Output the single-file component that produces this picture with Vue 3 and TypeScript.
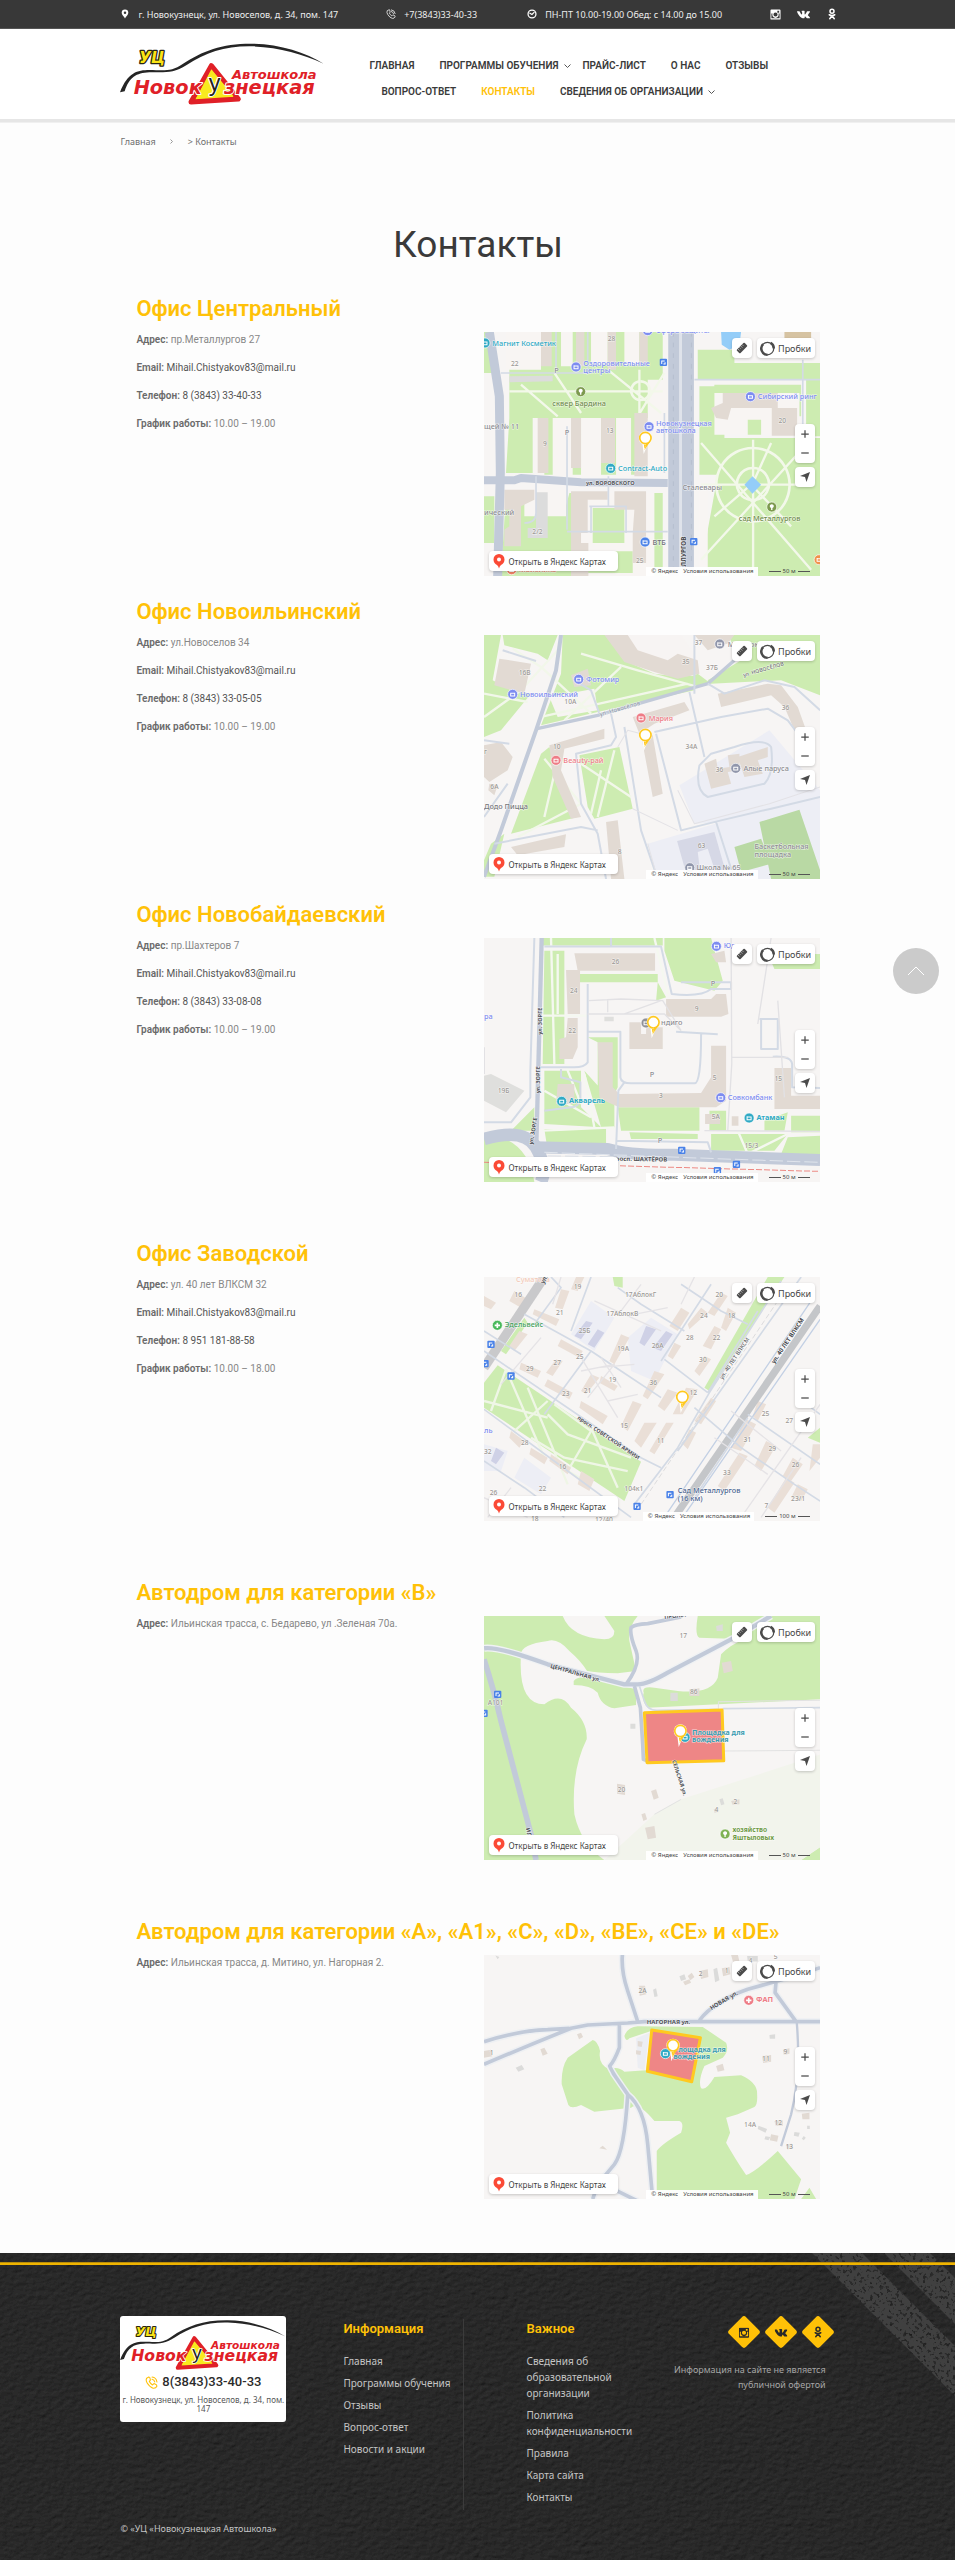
<script setup lang="ts">
import { h } from 'vue'

interface Shape { d: string; f?: string; s?: string; w?: number; dash?: string }
interface Label { x: number; y: number; t: string; c?: string; s?: number; r?: number; b?: boolean }
interface Poi { x: number; y: number; c: string; k: 'dot' | 'stop' | 'tree' | 'plus' }
interface CityMap { box: string; scale: string; shapes: Shape[]; pois: Poi[]; labels: Label[]; pin: [number, number] }
interface Place { title: string; rows: [string, string, boolean][]; map: CityMap; spaced: boolean }

const word = (x: number, y: number, size: number, text: string, attrs: Record<string, string | number> = {}) =>
  h('text', {
    x, y, 'font-size': size, 'font-family': 'DejaVu Sans, sans-serif', 'font-weight': 700, 'font-style': 'italic',
    fill: '#e02027', 'paint-order': 'stroke', 'stroke-linejoin': 'round', ...attrs
  }, text)

const SchoolLogo = () => h('svg', { viewBox: '62 124 612 192' }, [
  h('path', { fill: '#252525', d: 'M62 275C85 215 115 208 150 208C190 208 215 215 250 190C310 150 370 128 460 129C540 130 620 155 673 189C610 160 540 140 460 137C380 135 320 155 262 193C220 220 195 214 150 215C110 217 90 230 76 272Z' }),
  h('path', { fill: '#f8ea1e', stroke: '#e02027', 'stroke-width': 15, 'stroke-linejoin': 'round', d: 'M336 195L417 295L275 304Z' }),
  h('path', { fill: '#f8ea1e', d: 'M336 206L402 285L290 294Z' }),
  word(398, 236, 39, 'Автошкола'),
  word(103, 279, 58, 'Новок', { stroke: '#ffffff', 'stroke-width': 6 }),
  word(374, 279, 58, 'знецкая', { stroke: '#ffffff', 'stroke-width': 6 }),
  word(328, 271, 70, 'у', { fill: '#222222', stroke: '#ffffff', 'stroke-width': 6, 'font-family': 'Liberation Sans, sans-serif', 'font-weight': 400, 'font-style': 'normal' }),
  word(120, 188, 45, 'УЦ', { fill: '#fbe416', stroke: '#2a2611', 'stroke-width': 8 })
])

const G = '#cdecb1'
const B = '#e2dad3'
const R = '#c2cad9'
const P = '#d3dae5'
const Z = '#edeef5'
const VIO = '#7d8cf0'
const TEAL = '#2fa9c4'
const GRN = '#7c9a4e'
const PINK = '#ee7c86'
const BLUE = '#4a82e8'
const GREY = '#8d8d92'
const num = (x: number, y: number, t: string): Label => ({ x, y, t, c: '#9b9894', s: 20 })

const central: CityMap = {
  box: '9 7 1008 732', scale: '50 м', pin: [493, 325],
  shapes: [
    { d: 'M85 7H545V265H85ZM85 265H155V430H75ZM190 265H470V435H190ZM75 490H250V739H60ZM265 490H545V739H200ZM9 7H35V130H9ZM650 60H760V150H650ZM760 100H1017V150H760ZM655 170H730V435H655ZM730 325H1017V739H655ZM975 150H1017V320H975ZM700 165H960V260H690ZM9 500H40V640H9Z', f: G },
    { d: 'M75 7H180V120H75ZM240 7H275V110H240ZM330 7H380V105H330ZM430 7H475V105H430ZM160 265H175V430H160ZM215 265H275V440H215ZM300 265H360V440H300ZM405 265H450V440H405ZM500 150H560V430H500ZM700 190H955V315H700ZM290 490H520V739H290ZM655 480H680V739H655ZM130 480H255V560H130Z', f: '#f8f5f3' },
    { d: 'M335 535H430V640H335ZM310 665H455V730H310ZM280 120H370L340 260H290ZM800 270H840V315H800Z', f: G },
    { d: 'M85 185H545M120 165L230 260M220 130L300 250M380 120L540 250M475 120V260M550 130L470 260M660 340L990 720M980 340L660 690M816 330V739M660 465H1000M700 560L810 465L930 590M870 340L820 450', s: '#f3f8ea', w: 7 },
    { d: 'M815 355a110 110 0 1 0 1 0M815 415a48 48 0 1 0 1 0M478 155a28 28 0 1 0 1 0', s: '#f3f8ea', w: 8 },
    { d: 'M180 7H212V110H180ZM285 7H310V110H285ZM380 7H405V120H380ZM475 7H500V105H475ZM170 265H202V430H170ZM270 265H300V415H270ZM360 265H402V400H360ZM460 250H500V440H460ZM70 480H160V510L120 530V650H70V600L85 590V540H70ZM270 485H380V510H320V610H300V640H322V739H270ZM400 485H495V700H455V610L460 540H400ZM725 190H890V235H750L740 270L705 265L690 235L725 220ZM872 235H948V318H872Z', f: B },
    { d: 'M85 140L215 138V155L85 158ZM165 488H200V625H140V595H165Z', f: '#dcdcdc' },
    { d: 'M910 7H990V60L910 45Z', f: '#d6c3a2' },
    { d: 'M25 7L55 200L58 430L50 739', s: R, w: 27 },
    { d: 'M9 452H100L120 445L300 458L560 460', s: R, w: 24 },
    { d: 'M580 7V739M620 7V739', s: R, w: 37 },
    { d: 'M598 7V739', s: '#dfe3eb', w: 8 },
    { d: 'M577 7V739M631 7V739', s: '#b0b9ca', w: 2, dash: '14 18' },
    { d: 'M640 150H1017M60 130H330M258 290V600M382 440V530M325 530H435V610M330 610V530M258 606H560M470 606H520M550 250V430M130 580Q165 580 165 550V440M965 90V330M225 7V120M320 7V120', s: P, w: 5 },
    { d: 'M720 7L780 7L775 45L745 60L722 45Z', f: '#94cdf8' },
    { d: 'M814 440L840 465L814 492L790 465Z', f: '#94cdf8' }
  ],
  pois: [
    { x: 12, y: 40, c: TEAL, k: 'dot' }, { x: 285, y: 112, c: VIO, k: 'dot' }, { x: 299, y: 186, c: GRN, k: 'tree' },
    { x: 504, y: 291, c: VIO, k: 'dot' }, { x: 389, y: 416, c: TEAL, k: 'dot' }, { x: 808, y: 201, c: VIO, k: 'dot' },
    { x: 872, y: 532, c: GRN, k: 'tree' }, { x: 492, y: 637, c: BLUE, k: 'dot' }, { x: 547, y: 98, c: BLUE, k: 'stop' },
    { x: 638, y: 636, c: BLUE, k: 'stop' }, { x: 92, y: 720, c: '#ee8066', k: 'dot' }, { x: 1014, y: 690, c: '#f0924c', k: 'dot' }, { x: 500, y: 3, c: VIO, k: 'dot' }
  ],
  labels: [
    { x: 34, y: 48, t: 'Магнит Косметик', c: TEAL }, { x: 307, y: 109, t: 'Оздоровительные', c: VIO }, { x: 307, y: 131, t: 'центры', c: VIO },
    { x: 214, y: 229, t: 'сквер Бардина', c: '#6f8b4c' }, { x: 525, y: 288, t: 'Новокузнецкая', c: VIO }, { x: 525, y: 310, t: 'автошкола', c: VIO },
    { x: 411, y: 424, t: 'Contract-Auto', c: TEAL }, { x: 830, y: 208, t: 'Сибирский ринг', c: VIO }, { x: 773, y: 575, t: 'сад Металлургов', c: '#6f8b4c' },
    { x: 604, y: 482, t: 'Сталевары', c: GREY }, { x: 514, y: 645, t: 'ВТБ', c: '#6f7078' }, { x: 9, y: 297, t: 'щей № 11', c: GREY },
    { x: 9, y: 556, t: 'ический', c: GREY }, { x: 315, y: 465, t: 'ул. ВОРОВСКОГО', c: '#55575c', s: 17, b: true },
    { x: 614, y: 710, t: 'ЛЛУРГОВ', c: '#44464b', s: 19, r: -90, b: true }, { x: 114, y: 726, t: 'Майолика', c: '#ee8066' },
    { x: 525, y: 9, t: 'Сфера защиты', c: VIO }, { x: 220, y: 131, t: 'P', c: GREY }, { x: 251, y: 317, t: 'P', c: GREY },
    num(380, 34, '28'), num(90, 109, '22'), num(186, 348, '9'), num(375, 309, '13'), num(892, 279, '20'), num(154, 614, '2/2'), num(465, 699, '25')
  ]
}

const ilyinsky: CityMap = {
  box: '9 14 1008 732', scale: '50 м', pin: [493, 314],
  shapes: [
    { d: 'M9 14H60L35 150L90 180L150 190L60 300L9 320ZM65 14H230L200 90L170 70L70 45ZM245 14H390L520 120L650 140L640 180L350 245L180 285L240 130ZM740 14H1017V195L900 150L690 160L680 150L780 90ZM280 40L400 110L580 160L650 130L690 160L450 215L350 240L340 180ZM180 370L205 350L260 500L290 560L90 610ZM295 375L415 350L455 535L340 565L320 530ZM30 640L70 610L40 739H9L9 690Z', f: G },
    { d: 'M380 14H600L650 90L600 140L520 130L440 95ZM205 200L340 175L350 240L230 260Z', f: '#f7f4f3' },
    { d: 'M595 465L865 300L1017 480V560L640 580ZM500 640L720 575L840 535L1017 500V746H530Z', f: Z },
    { d: 'M835 575L955 538L1017 720V746H870ZM760 650L840 625L870 700L780 725Z', f: '#b9d9a4' },
    { d: 'M588 632L700 605L740 746H710L680 655L650 665L660 746H620Z', f: '#d6d8e6' },
    { d: 'M9 190L140 215M95 55L180 110L330 250M300 70L470 120L650 170M180 260L620 160M420 110L250 270M110 620L300 520L190 385M190 560L220 430M300 400L450 500M360 420L330 550M400 360L350 560M9 260L120 180L230 60', s: '#f2f7ea', w: 7 },
    { d: 'M55 85L150 100L130 190L40 165ZM9 345L60 335L95 380L80 420L25 455L9 440ZM25 460L50 465L40 495L22 480ZM270 135L320 115L330 165L280 170ZM370 14H440L470 60L560 90L590 70L650 90L655 130L590 145L520 125L430 95ZM640 14H760L740 40L680 60ZM455 260L610 215L625 240L520 280L475 310ZM480 315H515L545 490L515 500ZM205 345L370 295V325L250 355L240 420L300 560L270 565L215 440ZM710 190L860 160L900 165L950 230L975 300L940 300L910 230L870 195L720 230ZM670 400L705 385L710 415L745 410L740 375L775 370V420L740 425L750 460L690 475ZM770 380L860 350V380L830 390L845 430L790 440ZM375 575L410 570L430 746H390ZM90 650L255 612L250 650L110 675Z', f: B },
    { d: 'M9 739L60 600L165 300L225 120L240 14', s: R, w: 12 },
    { d: 'M165 296L350 255L680 160L760 90', s: R, w: 10 },
    { d: 'M390 250L405 320L390 345L285 370L300 520L350 610L375 746M625 185L670 380M520 305L720 260L860 235L920 270L950 310M525 310L600 600L720 570L870 535L1017 500M680 160L730 190L850 150L940 170L1017 240M655 405Q640 480 680 500L850 460Q880 430 870 350Q850 320 760 350L690 370ZM65 60L165 92M280 150L330 180L355 250M9 330L85 340M40 640L300 590L350 600M9 560L80 460M705 575L760 746M430 290L480 600L530 746M640 14L640 190', s: P, w: 6 },
    { d: 'M410 350L440 300L480 310M455 535L590 600M590 480L640 580L865 520L1017 470M500 640L530 746', s: '#e3e2e6', w: 3 }
  ],
  pois: [
    { x: 293, y: 147, c: VIO, k: 'dot' }, { x: 95, y: 192, c: VIO, k: 'dot' }, { x: 480, y: 263, c: PINK, k: 'dot' },
    { x: 225, y: 390, c: PINK, k: 'dot' }, { x: 764, y: 414, c: '#9096ab', k: 'dot' }, { x: 716, y: 41, c: '#9096ab', k: 'dot' }, { x: 626, y: 712, c: '#9096ab', k: 'dot' }
  ],
  labels: [
    { x: 315, y: 154, t: 'Фотомир', c: VIO }, { x: 117, y: 200, t: 'Новоильинский', c: VIO }, { x: 503, y: 271, t: 'Мария', c: PINK },
    { x: 247, y: 397, t: 'Beauty-рай', c: PINK }, { x: 787, y: 421, t: 'Алые паруса', c: GREY }, { x: 740, y: 49, t: 'Мои док', c: GREY },
    { x: 9, y: 535, t: 'Додо Пицца', c: '#77777c' }, { x: 820, y: 656, t: 'Баскетбольная', c: GREY }, { x: 820, y: 679, t: 'площадка', c: GREY },
    { x: 646, y: 720, t: 'Школа № 65', c: GREY }, { x: 788, y: 140, t: 'ул. НОВОСЁЛОВ', c: '#6a6c70', s: 16, r: -16 },
    { x: 358, y: 258, t: 'ул. Новосёлов', c: '#8d97a8', s: 18, r: -16 },
    num(113, 134, '16В'), num(641, 44, '37'), num(603, 102, '35'), num(675, 118, '37Б'), num(902, 240, '36'), num(216, 357, '10'),
    num(613, 357, '34А'), num(704, 426, '36'), num(650, 652, '63'), num(28, 477, '6А'), num(410, 672, '8'), num(250, 222, '10А'), num(9, 372, 'г')
  ]
}

const baydaevsky: CityMap = {
  box: '9 22 1008 732', scale: '50 м', pin: [517, 275],
  shapes: [
    { d: 'M185 22H545V45H185ZM190 60H250V400H185ZM270 130H530V155H270ZM550 22H690L725 150L700 180L580 150L550 60ZM530 155L555 200L525 210ZM860 70H1017V115H880ZM320 320H410V470L400 490H350V335ZM190 420H300V530L360 590L190 580ZM410 530H655V600H420ZM310 420L400 520L400 590H360ZM685 540H735V600H685ZM850 570L920 545L910 600H850ZM930 555H1017V605H930ZM190 595H375V660H200ZM445 605L650 610V625H450ZM690 610H920L880 660H690ZM920 620L1017 615V670H900ZM9 610Q140 620 160 754H9ZM160 530V600L90 600Z', f: G },
    { d: 'M210 22L220 400M185 255H320M230 70V250M260 400V420L300 520M190 480L330 560M185 600L400 590M520 22L560 190M310 430L340 590M770 600L800 670L920 610', s: '#f5f8f0', w: 7 },
    { d: 'M280 68H522V120H290ZM255 118H297V250H260ZM260 262H290V350L275 385H235V325L255 320ZM350 335H395V470L415 490L660 487L690 440V345H735V510L705 530H415L380 515L355 500ZM555 205H690L705 190H735L742 250L720 258H555ZM445 275L480 275V310H495V290H545V355H445ZM230 460H280V520H225ZM672 550H717V580H672ZM752 557H772V585H752ZM880 412H930V495H1017V535H880ZM690 70L730 60L735 95H705Z', f: B },
    { d: 'M9 435L30 430L130 480L75 545L9 510ZM370 258H398V272H370Z', f: '#dfdfdd' },
    { d: 'M160 22L148 420V500L90 575H9', s: P, w: 6 },
    { d: 'M182 22L166 640', s: R, w: 13 },
    { d: 'M9 625Q130 590 165 650T180 754', s: R, w: 38 },
    { d: 'M160 650L380 655Q450 675 580 672L1017 688', s: R, w: 36 },
    { d: 'M190 665L1017 695M200 675L500 680', s: '#dfe4ec', w: 3, dash: '40 12' },
    { d: 'M9 695L400 705L1017 722', s: '#ed8a84', w: 3, dash: '18 6' },
    { d: 'M190 48H540L572 190Q660 200 690 175H750V155H600M320 160V395Q310 410 280 410H180M320 303H418V440Q420 458 450 458H640Q660 460 660 310M585 303L710 311M430 455L412 480L405 655M240 415V440L298 455V510Q290 530 270 530L190 540M408 630L680 635L690 665M875 378Q930 375 933 400V470L1017 472M390 22V48M835 265H890V355H840V265', s: P, w: 6 },
    { d: 'M750 22L752 400L740 600M870 22L830 280M890 210L910 500M323 210L420 205L545 210L600 300M430 250L540 210M752 380H920M10 350L10 430M380 205V245M320 250H550L600 300M670 600L1017 602', s: '#e2e1e4', w: 4 }
  ],
  pois: [
    { x: 706, y: 47, c: VIO, k: 'dot' }, { x: 495, y: 277, c: '#8f9097', k: 'dot' }, { x: 242, y: 512, c: TEAL, k: 'dot' },
    { x: 719, y: 501, c: VIO, k: 'dot' }, { x: 804, y: 562, c: TEAL, k: 'dot' }, { x: 602, y: 659, c: BLUE, k: 'stop' }, { x: 766, y: 701, c: BLUE, k: 'stop' }, { x: 709, y: 720, c: BLUE, k: 'stop' }
  ],
  labels: [
    { x: 728, y: 52, t: 'Юдин', c: VIO }, { x: 540, y: 284, t: 'ндиго', c: GREY }, { x: 264, y: 518, t: 'Акварель', c: TEAL, b: true },
    { x: 740, y: 507, t: 'Совкомбанк', c: VIO }, { x: 826, y: 568, t: 'Атаман', c: TEAL, b: true },
    { x: 182, y: 312, t: 'ул. ЗОРГЕ', c: '#4f5156', s: 17, r: -90, b: true }, { x: 177, y: 488, t: 'ул. ЗОРГЕ', c: '#4f5156', s: 17, r: -90, b: true },
    { x: 155, y: 642, t: 'ул. ЗОРГЕ', c: '#4f5156', s: 17, r: -80, b: true }, { x: 392, y: 690, t: 'просп. ШАХТЁРОВ', c: '#4f5156', s: 18, r: 1, b: true },
    { x: 9, y: 266, t: 'ра', c: VIO }, { x: 689, y: 167, t: 'P', c: GREY }, { x: 506, y: 439, t: 'P', c: GREY }, { x: 530, y: 638, t: 'P', c: GREY },
    num(392, 100, '26'), num(267, 186, '24'), num(262, 307, '22'), num(641, 240, '9'), num(534, 501, '3'), num(695, 447, '5'), num(692, 566, '5А'),
    num(880, 450, '15'), num(50, 487, '19Б'), num(790, 651, '15/3')
  ]
}

const zavodskoy: CityMap = {
  box: '9 18 1008 732', scale: '100 м', pin: [604, 378],
  shapes: [
    { d: 'M50 283L480 572L430 690L9 410V335Z', f: G },
    { d: 'M670 350L860 18H910L685 360ZM395 18H425V50L400 45ZM60 240L130 140L140 155L75 250ZM980 500L1017 470V515Z', f: G },
    { d: 'M270 190L330 90L400 140L340 240ZM440 200L510 140L590 190L520 330L450 300ZM9 520L80 540L60 600L9 600ZM130 560L210 620L180 670L100 620Z', f: Z },
    { d: 'M30 420L75 295M75 295L190 560M9 390L200 440M140 350L260 640M220 400L330 480L260 600L330 640M330 470L410 650M200 430L260 490L450 560M150 500L250 560L440 600M100 480L200 390', s: '#eff6e6', w: 7 },
    { d: 'M240 55L265 60L245 115L222 110ZM285 18H310L290 60L270 55ZM160 115L235 145L225 165L155 130ZM115 180L140 190L100 240L85 225ZM240 205L305 240L295 260L230 225ZM225 265L245 270L215 315L195 305ZM120 275L180 300L170 320L115 295ZM200 325L275 365L265 385L190 345ZM330 310L355 320L315 370L300 360ZM360 315L410 345L400 360L355 335ZM300 390L380 435L365 460L295 410ZM455 390L482 400L440 480L420 465ZM490 455L527 455L480 530L460 510ZM555 455H578L520 550L505 540ZM520 300L550 310L500 385L485 375ZM560 355L590 365L550 420L530 405ZM615 350L650 355L605 430L575 430ZM420 190L445 200L400 280L385 270ZM600 110L625 125L590 180L565 165ZM660 110L680 125L625 175L620 160ZM720 65L740 75L700 135L680 125ZM740 110L765 125L735 180L720 170ZM700 165L720 175L690 235L665 225ZM580 215L600 225L575 265L560 255ZM670 255L690 265L655 315L640 300ZM690 380L705 390L660 460L640 450ZM625 475L645 485L620 535L605 520ZM795 445L825 460L780 540L750 530ZM775 545L800 555L730 660L710 645ZM855 510L885 525L840 600L820 585ZM935 560L965 580L930 630L905 615ZM915 620L940 635L880 725L860 710ZM995 520H1017V560L985 600ZM830 390L855 400L830 450L815 435ZM950 640L980 655L960 690L930 680ZM90 480L130 510L115 530L85 500ZM150 530L200 560L190 580L145 550ZM210 550L270 590L260 610L205 570ZM300 600L340 625L325 660L290 640ZM9 75L45 95L30 115L9 105ZM100 60L140 85L120 110L85 90Z', f: '#eadfd7' },
    { d: 'M315 150L335 155L300 205L280 195ZM350 175L370 185L340 230L320 220ZM495 165L525 175L490 225L475 215ZM555 180L575 190L540 240L515 230ZM45 530L70 545L45 580L30 570Z', f: '#cfd1e6' },
    { d: 'M9 290L190 18', s: '#c9c9cb', w: 28 },
    { d: 'M575 746L1017 105', s: '#c4c6c9', w: 22 },
    { d: 'M600 746L1017 145M545 746L990 90', s: '#c3d0e4', w: 4 },
    { d: 'M480 700L910 60', s: '#cfcfd1', w: 2, dash: '16 8' },
    { d: 'M9 240L480 560L540 590M550 265L680 365M460 700L590 530L685 365L900 30M130 130L330 240L420 300L540 380M540 270L690 40M210 18L240 50L160 160M330 18L270 180M410 50L480 100L610 180M800 430L1017 580M960 18L590 540M9 415L260 600L450 739M640 410L780 530L940 640L1017 690M9 570L130 650L250 739M800 440L640 680M9 180L120 250M330 240L190 430M600 40L720 120L800 160M950 380L1017 430M680 365L830 120', s: P, w: 5 },
    { d: 'M9 680L140 739M20 739L90 650M360 260L420 350M350 290L460 280M300 300L400 280L320 380M380 390L470 370M240 18L215 100M340 90L540 180M480 40L420 120M700 500L860 610M750 420L900 540M640 18L600 100M460 130L560 110M410 440L300 260M840 739L960 560M780 739L1017 400M180 200L60 340', s: '#e5e3e6', w: 4 }
  ],
  pois: [
    { x: 49, y: 163, c: '#48b85a', k: 'plus' }, { x: 30, y: 220, c: BLUE, k: 'stop' }, { x: 90, y: 315, c: BLUE, k: 'stop' }, { x: 12, y: 278, c: BLUE, k: 'stop' },
    { x: 567, y: 671, c: BLUE, k: 'stop' }, { x: 468, y: 706, c: BLUE, k: 'stop' }
  ],
  labels: [
    { x: 71, y: 169, t: 'Эдельвейс', c: '#3f9f5a' }, { x: 590, y: 667, t: 'Сад Металлургов', c: '#4b6590' }, { x: 590, y: 689, t: '(16 км)', c: '#4b6590' },
    { x: 288, y: 443, t: 'просп. СОВЕТСКОЙ АРМИИ', c: '#4f5156', s: 16, r: 34, b: true },
    { x: 724, y: 326, t: 'ул. 40 ЛЕТ ВЛКСМ', c: '#5b5d62', s: 17, r: -56 }, { x: 880, y: 279, t: 'ул. 40 ЛЕТ ВЛКСМ', c: '#44464b', s: 18, r: -56, b: true },
    { x: 105, y: 34, t: 'Суматоха', c: '#f3cbb9' }, { x: 188, y: 40, t: 'ул.', c: '#55575c', s: 19, r: -60, b: true },
    { x: 9, y: 487, t: 'ль', c: VIO },
    num(100, 78, '16'), num(278, 54, '19'), num(225, 131, '21'), num(432, 78, '17АблокГ'), num(376, 134, '17АблокВ'), num(293, 187, '25Б'), num(512, 232, '26А'),
    num(408, 241, '19А'), num(285, 265, '25'), num(217, 283, '27'), num(135, 301, '29'), num(383, 333, '19'), num(308, 367, '21'), num(243, 375, '23'),
    num(505, 341, '36'), num(625, 372, '12'), num(654, 272, '30'), num(615, 206, '28'), num(695, 207, '22'), num(657, 140, '24'), num(740, 141, '18'), num(703, 77, '20'),
    num(418, 472, '15'), num(527, 516, '11'), num(787, 512, '31'), num(862, 539, '29'), num(726, 611, '33'), num(842, 434, '25'), num(913, 457, '27'), num(932, 589, '26'),
    num(850, 711, '7'), num(930, 691, '23/1'), num(120, 523, '28'), num(233, 594, '16'), num(173, 659, '22'), num(26, 672, '26'), num(9, 548, '32'), num(430, 660, '104к1'), num(342, 754, '12/40'), num(150, 751, '18')
  ]
}

const trackB: CityMap = {
  box: '9 15 1008 732', scale: '50 м', pin: [598, 360],
  shapes: [
    { d: 'M9 15H245Q270 80 370 85Q400 85 400 60L370 15H470Q440 50 445 90L465 180L410 187Q345 185 318 180Q300 150 265 120Q230 80 200 90Q120 100 120 130Q110 280 190 280Q240 240 270 290Q320 330 317 385Q270 480 280 610Q300 700 370 747H9Z', f: G },
    { d: 'M278 210Q290 195 320 200L465 235V282L400 292Q360 285 350 245Q330 222 278 222ZM650 15H1017V265L500 290Q480 270 488 245Q480 225 520 230L590 240Q690 250 710 200L720 130Q750 100 790 85L655 80Q640 75 650 15ZM960 747L1017 708V747Z', f: G },
    { d: 'M370 747L520 610Q560 585 600 565L880 475L1017 430V708L960 747Z', f: '#f2f4ec' },
    { d: 'M9 112Q50 105 200 160L430 220H470Q500 220 560 185L760 80L870 15', s: '#f0f2f4', w: 21 },
    { d: 'M9 112Q50 105 200 160L430 220H470Q500 220 560 185L760 80L870 15', s: R, w: 13 },
    { d: 'M435 220Q480 160 465 120Q445 70 450 50Q460 40 500 38L600 18M460 225L478 290L485 400L487 445L500 450', s: R, w: 11 },
    { d: 'M9 145Q40 240 60 330L150 670L165 747', s: R, w: 17 },
    { d: 'M475 225L490 270Q500 300 530 298L710 295M725 293L1017 290', s: P, w: 5 },
    { d: 'M712 295V272L1017 268M725 420L1017 418M520 610L600 565', s: '#e2e2e2', w: 3 },
    { d: 'M722 155L750 150L755 180L728 187ZM625 235L655 232V255H625ZM408 518L432 522V552L408 548ZM510 540L525 535L533 560L518 566ZM492 650L520 645L525 680L500 685ZM481 610L492 606L498 625L487 630ZM698 595L712 590V604L700 605ZM750 570L775 565V580L755 582Z', f: B },
    { d: 'M705 45L725 40V60H707ZM568 245L590 245V270H568ZM448 338H463V353H448ZM715 565L725 562L730 580L720 583Z', f: '#dcdcda' },
    { d: 'M490 305L723 297L728 449L498 455Z', f: '#ee8686', s: '#ffc91f', w: 9 }
  ],
  pois: [{ x: 612, y: 379, c: '#2fa9c4', k: 'dot' }, { x: 732, y: 669, c: '#7fb253', k: 'tree' }, { x: 50, y: 250, c: BLUE, k: 'stop' }, { x: 9, y: 307, c: BLUE, k: 'stop' }],
  labels: [
    { x: 633, y: 371, t: 'Площадка для', c: '#3a9cb0', b: true, s: 21 }, { x: 633, y: 393, t: 'вождения', c: '#3a9cb0', b: true, s: 21 },
    { x: 207, y: 170, t: 'ЦЕНТРАЛЬНАЯ ул.', c: '#4f5156', s: 17, r: 16, b: true }, { x: 573, y: 449, t: 'СЕЛЬСКАЯ ул.', c: '#4f5156', s: 16, r: 72, b: true },
    { x: 754, y: 663, t: 'хозяйство', c: '#6f9a45', b: true, s: 20 }, { x: 754, y: 686, t: 'Яштыловых', c: '#6f9a45', b: true, s: 20 },
    { x: 550, y: 24, t: 'ПРОЛЕТ', c: '#55575c', s: 17, r: -6, b: true }, { x: 134, y: 652, t: 'ИЛЬИНС', c: '#55575c', s: 18, r: 76, b: true },
    num(595, 82, '17'), num(627, 250, '86'), num(410, 542, '20'), num(757, 579, '2'), num(700, 604, '4'), num(20, 282, 'А101')
  ]
}

const trackA: CityMap = {
  box: '9 12 1008 732', scale: '50 м', pin: [576, 283],
  shapes: [
    { d: 'M430 255Q440 228 470 226L665 228L735 275Q745 300 725 320L670 345Q650 390 660 412Q675 420 700 378L780 373Q830 395 828 430Q830 460 820 468L770 490L735 500L747 545L735 575Q760 620 795 672Q820 665 890 600L960 685L940 744H527V600Q540 580 600 545Q610 515 595 510H520Q470 450 450 470L340 482L300 462Q270 475 262 462L242 400Q240 350 260 320L335 267Q350 270 357 300Q350 340 385 355Q410 345 430 362L495 358L510 240L445 262Q435 275 430 255ZM960 744L985 710L1005 744Z', f: G },
    { d: 'M465 262L505 245L490 358L470 350Z', f: '#eceef3' },
    { d: 'M9 272Q120 238 200 236L265 232M9 340Q150 280 270 232L320 222L440 216L490 212H1017M424 12Q420 60 440 120L470 212M415 222V290Q400 330 386 345Q390 360 440 430Q430 600 400 640L350 700L335 744M395 365L440 430Q490 470 500 580L515 744M655 208Q700 150 800 115L960 70L1017 50M885 90L882 125L945 212M405 718L470 750', s: '#eef0f3', w: 20 },
    { d: 'M9 272Q120 238 200 236L265 232M9 340Q150 280 270 232L320 222L440 216L490 212H1017M424 12Q420 60 440 120L470 212M415 222V290Q400 330 386 345Q390 360 440 430Q430 600 400 640L350 700L335 744M395 365L440 430Q490 470 500 580L515 744M655 208Q700 150 800 115L960 70L1017 50M885 90L882 125L945 212M405 718L470 750', s: R, w: 11 },
    { d: 'M947 215Q960 370 930 490L900 585', s: R, w: 7 },
    { d: 'M474 104L492 104L496 130L476 134ZM620 75L632 65L640 78L628 88ZM606 92L625 85L630 95L612 103ZM655 60L680 55L682 78L660 84ZM722 52L745 48L748 70L726 76ZM178 295L190 290L200 308L185 314ZM9 300L30 296L34 316L9 320ZM288 250L300 245L306 258L294 265ZM843 315L870 312V332L846 336ZM905 296L925 292V308L908 312ZM705 345L725 338L730 358L710 362ZM962 488L985 485V505H964ZM880 510L905 508V525H884ZM870 550L892 554L888 572L866 568ZM355 592L365 584L378 596ZM750 12L770 10L775 32L757 38ZM470 270L485 272L482 288L470 286ZM465 298L480 300L478 312L465 310ZM915 580L932 578V592L918 596Z', f: B },
    { d: 'M595 76L610 70L615 85L600 90ZM697 55L708 50L715 88L702 94ZM516 116L525 112L530 136L520 138ZM104 350L122 342L130 355L112 362ZM865 252L882 250V263H866ZM832 524L858 534L853 545L830 534ZM940 543L956 545L952 557L938 554ZM968 555L974 560L968 568L962 563ZM853 556L868 558L862 568L850 565ZM798 15H830V32H800ZM978 524H986V534H978ZM43 14L55 18L50 25Z', f: '#dbdbda' },
    { d: 'M512 237L658 260L632 392L499 361Z', f: '#ee8686', s: '#ffc91f', w: 9 }
  ],
  pois: [{ x: 553, y: 308, c: '#2fa9c4', k: 'dot' }, { x: 803, y: 148, c: PINK, k: 'plus' }],
  labels: [
    { x: 592, y: 303, t: 'лощадка для', c: '#3a9cb0', b: true, s: 21 }, { x: 577, y: 325, t: 'вождения', c: '#3a9cb0', b: true, s: 21 },
    { x: 825, y: 154, t: 'ФАП', c: PINK, b: true }, { x: 497, y: 220, t: 'НАГОРНАЯ ул.', c: '#4f5156', s: 18, b: true },
    { x: 691, y: 178, t: 'НОВАЯ ул.', c: '#4f5156', s: 18, r: -31, b: true },
    num(472, 127, '2А'), num(653, 75, '2'), num(731, 66, '1'), num(802, 37, '4'), num(878, 24, '5'), num(843, 330, '11'), num(907, 309, '9'),
    num(880, 523, '12'), num(789, 527, '14А'), num(913, 594, '13'), num(26, 312, '1')
  ]
}

const office = (title: string, address: string, phone: string, hours: string, map: CityMap, spaced = false): Place => ({
  title, map, spaced,
  rows: [['Адрес:', address, false], ['Email:', 'Mihail.Chistyakov83@mail.ru', true], ['Телефон:', phone, true], ['График работы:', hours, false]]
})

const places: Place[] = [
  office('Офис Центральный', 'пр.Металлургов 27', '8 (3843) 33-40-33', '10.00 – 19.00', central),
  office('Офис Новоильинский', 'ул.Новоселов 34', '8 (3843) 33-05-05', '10.00 – 19.00', ilyinsky),
  office('Офис Новобайдаевский', 'пр.Шахтеров 7', '8 (3843) 33-08-08', '10.00 – 19.00', baydaevsky, true),
  office('Офис Заводской', 'ул. 40 лет ВЛКСМ 32', '8 951 181-88-58', '10.00 – 18.00', zavodskoy, true),
  { title: 'Автодром для категории «В»', rows: [['Адрес:', 'Ильинская трасса, с. Бедарево, ул .Зеленая 70а.', false]], map: trackB, spaced: true },
  { title: 'Автодром для категории «A», «A1», «C», «D», «BE», «CE» и «DE»', rows: [['Адрес:', 'Ильинская трасса, д. Митино, ул. Нагорная 2.', false]], map: trackA, spaced: true }
]

const navRows = [
  [{ t: 'ГЛАВНАЯ' }, { t: 'ПРОГРАММЫ ОБУЧЕНИЯ', menu: true }, { t: 'ПРАЙС-ЛИСТ' }, { t: 'О НАС' }, { t: 'ОТЗЫВЫ' }],
  [{ t: 'ВОПРОС-ОТВЕТ' }, { t: 'КОНТАКТЫ', active: true }, { t: 'СВЕДЕНИЯ ОБ ОРГАНИЗАЦИИ', menu: true }]
] as { t: string; menu?: boolean; active?: boolean }[][]

const infoLinks = ['Главная', 'Программы обучения', 'Отзывы', 'Вопрос-ответ', 'Новости и акции']
const mainLinks = ['Сведения об образовательной организации', 'Политика конфиденциальности', 'Правила', 'Карта сайта', 'Контакты']
const socials = [{ id: 'ig', t: 'Instagram' }, { id: 'vk', t: 'ВКонтакте' }, { id: 'ok', t: 'Одноклассники' }]
const toTop = () => window.scrollTo({ top: 0, behavior: 'smooth' })
</script>

<template>
  <div class="page">
    <svg class="defs" aria-hidden="true">
      <symbol id="ig" viewBox="0 0 24 24">
        <path fill-rule="evenodd" fill="currentColor" d="M3 1H21Q23 1 23 3V21Q23 23 21 23H3Q1 23 1 21V3Q1 1 3 1ZM16 4V8H20V4ZM3 10V20H21V10H18.500A7 7 0 1 1 5.500 10ZM12 7.500A4.500 4.500 0 1 0 12 16.500A4.500 4.500 0 1 0 12 7.500Z" />
      </symbol>
      <symbol id="vk" viewBox="0 0 24 24">
        <path fill="currentColor" d="M13.162 18.994c.609 0 .858-.406.851-.915-.031-1.917.714-2.949 2.059-1.604 1.488 1.488 1.796 2.519 3.603 2.519h3.2c.808 0 1.126-.26 1.126-.668 0-.863-1.421-2.386-2.625-3.504-1.686-1.565-1.765-1.602-.313-3.486 1.801-2.339 4.157-5.336 2.073-5.336h-3.981c-.772 0-.828.435-1.103 1.083-.995 2.347-2.886 5.387-3.604 4.922-.751-.485-.407-2.406-.35-5.261.015-.754.011-1.271-1.141-1.539-.629-.145-1.241-.205-1.809-.205-2.273 0-3.841.953-2.95 1.119 1.571.293 1.42 3.692 1.054 5.16-.638 2.556-3.036-2.024-4.035-4.305-.241-.548-.315-.974-1.175-.974h-3.255c-.492 0-.787.16-.787.516 0 .602 2.96 6.72 5.786 9.77 2.756 2.975 5.48 2.708 7.376 2.708z" />
      </symbol>
      <symbol id="ok" viewBox="0 0 24 24">
        <g fill="none" stroke="currentColor" stroke-width="3" stroke-linecap="round">
          <circle cx="12" cy="6.500" r="4" /><path d="M6.500 13.500Q12 17 17.500 13.500M12 15.500L7.500 21.500M12 15.500L16.500 21.500" />
        </g>
      </symbol>
      <symbol id="phone" viewBox="0 0 24 24">
        <g fill="none" stroke="currentColor" stroke-width="2" stroke-linecap="round" stroke-linejoin="round">
          <path d="M7 2L3 4Q1 8 4 13Q9 21 15 22.500Q20 23 22 19L21 16L16.500 14L14 16.500Q10 14 8 10L10 7.500L9 3Z" />
          <path d="M13 6Q17 7 18 11M13 2Q21 3 22 11" />
        </g>
      </symbol>
    </svg>

    <div class="topbar">
      <div class="wrap topbar-row">
        <span class="fact"><svg class="i10" viewBox="0 0 24 24"><path fill="#fff" fill-rule="evenodd" d="M12 1A8 8 0 0 1 20 9C20 14 14 18 12 23C10 18 4 14 4 9A8 8 0 0 1 12 1ZM12 6A3 3 0 1 0 12 12A3 3 0 1 0 12 6Z" /></svg>г. Новокузнецк, ул. Новоселов, д. 34, пом. 147</span>
        <a class="fact" href="tel:+73843334033"><svg class="i10"><use href="#phone" /></svg>+7(3843)33-40-33</a>
        <span class="fact hours"><svg class="i10" viewBox="0 0 24 24"><g fill="none" stroke="#fff" stroke-width="3" stroke-linecap="round"><circle cx="12" cy="12" r="9.500" /><path d="M7 10L12 13L17 8" /></g></svg>ПН-ПТ 10.00-19.00 Обед: с 14.00 до 15.00</span>
        <span class="top-social"><a v-for="s in socials" :key="s.id" href="#" :aria-label="s.t"><svg :class="'s-' + s.id"><use :href="'#' + s.id" /></svg></a></span>
      </div>
    </div>

    <header class="header">
      <div class="wrap header-row">
        <a class="logo" href="#" aria-label="Главная"><SchoolLogo class="logo-art" /></a>
        <nav class="nav">
          <ul v-for="(row, i) in navRows" :key="i">
            <li v-for="n in row" :key="n.t" :class="{ menu: n.menu }">
              <a href="#" :class="{ active: n.active }">{{ n.t }}<svg v-if="n.menu" viewBox="0 0 14 8"><path d="M1 1L7 7L13 1" fill="none" stroke="#555" stroke-width="2" /></svg></a>
            </li>
          </ul>
        </nav>
      </div>
    </header>

    <main class="wrap">
      <nav class="crumbs"><a href="#">Главная</a><svg viewBox="0 0 6 10"><path d="M1 1L5 5L1 9" fill="none" stroke="#999" stroke-width="2" /></svg><span>&gt; Контакты</span></nav>
      <h1>Контакты</h1>
      <section v-for="p in places" :key="p.title" class="place" :class="{ spaced: p.spaced }">
        <h2>{{ p.title }}</h2>
        <div class="place-row">
          <div class="info">
            <p v-for="r in p.rows" :key="r[0]"><b>{{ r[0] }}</b> <span :class="{ dark: r[2] }">{{ r[1] }}</span></p>
          </div>
          <div class="map">
            <svg class="map-art" :viewBox="p.map.box" preserveAspectRatio="xMidYMid slice">
              <path v-for="(s, i) in p.map.shapes" :key="i" :d="s.d" :fill="s.f || 'none'" :stroke="s.s || 'none'" :stroke-width="s.w || 0" :stroke-dasharray="s.dash" stroke-linejoin="round" />
              <g v-for="(o, i) in p.map.pois" :key="'p' + i" :transform="`translate(${o.x} ${o.y})`">
                <template v-if="o.k === 'stop'"><rect x="-11" y="-11" width="22" height="22" rx="3" :fill="o.c" /><path d="M-5 5V-4H4M0 5H5V0" fill="none" stroke="#fff" stroke-width="3" /></template>
                <template v-else>
                  <circle r="15" :fill="o.c" stroke="#fff" stroke-width="2" />
                  <path v-if="o.k === 'plus'" d="M0 -8V8M-8 0H8" stroke="#fff" stroke-width="5" />
                  <path v-else-if="o.k === 'tree'" d="M-2 9V3A6 6 0 1 1 2 3V9Z" fill="#fff" />
                  <path v-else d="M-6 -5V5H6V-3H-5" fill="none" stroke="#fff" stroke-width="3" />
                </template>
              </g>
              <text v-for="(l, i) in p.map.labels" :key="'l' + i" :x="l.x" :y="l.y" :font-size="l.s || 22" :fill="l.c" :font-weight="l.b ? 700 : 500" :transform="l.r ? `rotate(${l.r} ${l.x} ${l.y})` : undefined">{{ l.t }}</text>
              <g :transform="`translate(${p.map.pin[0]} ${p.map.pin[1]})`">
                <path d="M-7 16L7 14L-4 40Z" fill="#ffc91f" stroke="#fff" stroke-width="4" />
                <circle r="20" fill="#fff" /><circle r="17" fill="#fff" stroke="#ffc91f" stroke-width="5" />
                <path d="M2 18L16 8L-3 37Z" fill="#ffc91f" />
              </g>
            </svg>
            <div class="map-tools">
              <button type="button" class="tile" aria-label="Линейка"><svg viewBox="0 0 24 24"><g transform="rotate(-45 12 12)"><rect x="1" y="7" width="22" height="10" rx="2" fill="#4b4b4b" /><path d="M5 7V12M9 7V11M13 7V12M17 7V11" stroke="#fff" stroke-width="1" /></g></svg></button>
              <button type="button" class="tile wide"><svg viewBox="0 0 24 24"><g fill="none" stroke="#4b4b4b"><circle cx="12" cy="12" r="10" stroke-width="2" /><path d="M5 5A10 10 0 0 0 12 22M17 3A10 10 0 0 1 22 12" stroke-width="4" /></g></svg>Пробки</button>
            </div>
            <div class="map-side">
              <div class="zoom"><button type="button" aria-label="Приблизить"><svg viewBox="0 0 24 24"><path d="M12 3V21M3 12H21" stroke="#4b4b4b" stroke-width="3" /></svg></button><button type="button" aria-label="Отдалить"><svg viewBox="0 0 24 24"><path d="M3 12H21" stroke="#4b4b4b" stroke-width="3" /></svg></button></div>
              <button type="button" class="tile" aria-label="Моё местоположение"><svg viewBox="0 0 24 24"><path d="M22 2L15 22L12 12L2 10Z" fill="#4b4b4b" /></svg></button>
            </div>
            <a class="map-open" href="#"><svg viewBox="0 0 24 30"><path fill="#fb4a36" d="M12 0A11 11 0 0 1 23 11Q23 18 16 22Q13 24 12 29Q11 24 8 22Q1 18 1 11A11 11 0 0 1 12 0Z" /><circle cx="12" cy="11" r="4" fill="#fff" /></svg>Открыть в Яндекс Картах</a>
            <div class="map-foot"><span class="copy">© Яндекс</span><a href="#">Условия использования</a><span class="scale">{{ p.map.scale }}</span></div>
          </div>
        </div>
      </section>
    </main>

    <footer class="footer">
      <svg class="asphalt" aria-hidden="true">
        <filter id="grain" x="0" y="0" width="100%" height="100%">
          <feTurbulence type="fractalNoise" baseFrequency="0.16 0.22" numOctaves="3" seed="7" />
          <feDiffuseLighting surfaceScale="1" diffuseConstant="1" lighting-color="#323232"><feDistantLight azimuth="235" elevation="44" /></feDiffuseLighting>
        </filter>
        <filter id="speckle" x="0" y="0" width="100%" height="100%">
          <feTurbulence type="fractalNoise" baseFrequency="0.3" numOctaves="2" seed="3" result="n" />
          <feColorMatrix in="n" type="matrix" values="0 0 0 0 0  0 0 0 0 0  0 0 0 0 0  0 0 0 9 -3" result="m" />
          <feComposite in="SourceGraphic" in2="m" operator="in" />
        </filter>
        <rect width="100%" height="100%" fill="#232323" />
        <rect width="100%" height="100%" filter="url(#grain)" />
        <svg x="100%" width="155" height="180" overflow="visible">
          <path filter="url(#speckle)" transform="translate(-155 0)" d="M12 0H62L155 93V143ZM84 0H130L155 25V71Z" fill="#3f3f3f" />
        </svg>
      </svg>
      <div class="stripe"></div>
      <div class="wrap foot-grid">
        <div class="card">
          <SchoolLogo class="card-logo" />
          <a class="card-phone" href="tel:83843334033"><svg><use href="#phone" /></svg>8(3843)33-40-33</a>
          <p>г. Новокузнецк, ул. Новоселов, д. 34, пом. 147</p>
        </div>
        <div class="col ruled"><h3>Информация</h3><ul><li v-for="l in infoLinks" :key="l"><a href="#">{{ l }}</a></li></ul></div>
        <div class="col"><h3>Важное</h3><ul><li v-for="l in mainLinks" :key="l"><a href="#">{{ l }}</a></li></ul></div>
        <div class="side">
          <div class="diamonds"><a v-for="s in socials" :key="s.id" href="#" :aria-label="s.t"><svg :class="'s-' + s.id"><use :href="'#' + s.id" /></svg></a></div>
          <p>Информация на сайте не является публичной офертой</p>
        </div>
      </div>
      <p class="wrap copyright">© «УЦ «Новокузнецкая Автошкола»</p>
    </footer>

    <button type="button" class="to-top" aria-label="Наверх" @click="toTop"><svg viewBox="0 0 18 10"><path d="M1 9L9 1L17 9" fill="none" stroke="#fff" stroke-width="1" /></svg></button>
  </div>
</template>

<style>
body { background: #fdfdfd; }
</style>

<style scoped>
.page { position: relative; font-family: "Noto Sans", "Open Sans", sans-serif; font-size: 9px; color: #6f6f6f; }
.page * { box-sizing: border-box; }
.defs { position: absolute; width: 0; height: 0; }
a { color: inherit; text-decoration: none; }
ul { list-style: none; margin: 0; padding: 0; }
p { margin: 0; }
button { border: 0; padding: 0; margin: 0; font: inherit; color: inherit; cursor: pointer; background: #fff; }
svg { display: block; flex: none; }
.wrap { width: 75%; max-width: 1140px; min-width: 715px; margin: 0 auto; padding-left: 1px; }

.topbar { background: #383838; border-bottom: 1px solid #555; color: #eee; }
.topbar-row { display: flex; align-items: center; height: 28px; gap: 48px; white-space: nowrap; }
.fact { display: flex; align-items: center; gap: 8px; }
.hours { padding-left: 2px; }
.i10 { width: 10px; height: 10px; }
.top-social { display: flex; align-items: center; gap: 16px; color: #fff; }
.s-ig { width: 11px; height: 11px; }
.s-vk { width: 13px; height: 13px; }
.s-ok { width: 12px; height: 12px; }

.header { background: #fff; border-bottom: 3px solid #e6e6e6; box-shadow: 0 1px 0 #f0f0f0; }
.header-row { display: flex; align-items: center; height: 90px; }
.logo { width: 204px; }
.logo-art { width: 204px; height: 64px; }
.nav { padding: 9px 0 0 45px; font: 600 10px/26px Roboto, sans-serif; color: #3a3a3a; white-space: nowrap; }
.nav ul { display: flex; }
.nav ul + ul { padding-left: 12px; }
.nav li { padding-right: 25px; }
.nav li.menu { padding-right: 12px; }
.nav a { display: flex; align-items: center; }
.nav a svg { width: 7px; height: 4px; margin-left: 5px; }
.nav .active { color: #ffc107; }

.crumbs { display: flex; align-items: center; height: 38px; }
.crumbs svg { width: 3px; height: 5px; margin: 0 15px 0 14px; }
h1 { margin: 60px 0 25px; font: 400 37px/50px Roboto, sans-serif; text-align: center; color: #3a3a3a; }
.place { padding: 0 16px; margin-bottom: 22px; }
.place.spaced { margin-bottom: 58px; }
.place:last-child { margin-bottom: 54px; }
h2 { margin: 0 0 9px; font: 600 22px/28px Roboto, sans-serif; color: #ffc107; white-space: nowrap; }
.place-row { display: grid; grid-template-columns: 1fr 1fr; column-gap: 11px; }
.info { font: 400 10px/16px Roboto, sans-serif; color: #888; }
.info p { margin-bottom: 12px; }
.info b { font-weight: 600; color: #6a6a6a; }
.info .dark { color: #555; }

.map { position: relative; height: 244px; overflow: hidden; background: #f7f5f4; color: #444; }
.map-art { width: 100%; height: 100%; }
.map-art text { font-family: "Noto Sans", sans-serif; paint-order: stroke; stroke: #ffffffb0; stroke-width: 3px; }
.map-tools { position: absolute; top: 6px; right: 5px; display: flex; gap: 5px; }
.map-side { position: absolute; top: 92px; right: 5px; display: flex; flex-direction: column; gap: 4px; }
.tile, .zoom { display: flex; align-items: center; justify-content: center; width: 20px; height: 20px; border-radius: 4px; background: #fff; box-shadow: 0 1px 3px #0003; }
.tile svg { width: 12px; height: 12px; }
.tile.wide { width: 58px; gap: 3px; font-size: 9px; }
.tile.wide svg { width: 15px; height: 15px; }
.zoom { flex-direction: column; height: 39px; }
.zoom button { display: flex; align-items: center; justify-content: center; flex: 1; width: 20px; background: none; }
.zoom svg { width: 10px; height: 10px; }
.map-open { position: absolute; left: 5px; bottom: 5px; display: flex; align-items: center; gap: 4px; height: 20px; min-width: 129px; padding: 0 7px 0 4px; border-radius: 4px; background: #fff; box-shadow: 0 1px 3px #0003; white-space: nowrap; font-size: 8px; }
.map-open svg { width: 12px; height: 15px; }
.map-foot { position: absolute; right: 10px; bottom: 0; display: flex; align-items: center; height: 9px; font-size: 6px; line-height: 9px; white-space: nowrap; }
.copy, .map-foot a { background: #fffffff0; padding-left: 5px; }
.map-foot a { padding-right: 4px; }
.scale { display: flex; align-items: center; gap: 2px; margin-left: 11px; }
.scale::before, .scale::after { content: ""; width: 12px; height: 1px; background: #555; }

.footer { position: relative; overflow: hidden; background: #232323; color: #c4c4c4; min-height: 307px; }
.asphalt { position: absolute; inset: 0; width: 100%; height: 100%; }
.stripe { position: relative; margin-top: 9px; height: 3px; background: #f0b400; border-top: 1px solid #b98e0c; }
.foot-grid { position: relative; display: grid; grid-template-columns: 223fr 183fr 130fr 179fr; align-items: start; padding-top: 51px; min-height: 253px; }
.card { width: 166px; height: 106px; border-radius: 3px; background: #fff; color: #555; text-align: center; padding-top: 3px; }
.card-logo { width: 166px; height: 52px; }
.card-phone { display: flex; align-items: center; justify-content: center; gap: 4px; margin-top: 2px; font: 500 13px/18px Roboto, sans-serif; color: #2b2b2b; }
.card-phone svg { width: 13px; height: 13px; color: #ffc107; }
.card p { font-size: 8px; line-height: 9px; padding: 4px 2px 0; }
.col { margin-top: 3px; line-height: 16px; }
.col h3 { margin: 0 0 14px; font: 600 13px/20px Roboto, sans-serif; color: #ffc107; }
.col ul { font-size: 10px; }
.col li { margin-bottom: 6px; }
.ruled { width: 121px; height: 191px; border-right: 1px solid #3b3b3b; }
.side { display: flex; flex-direction: column; align-items: flex-end; text-align: right; padding-right: 2px; }
.diamonds { display: flex; gap: 13px; padding: 4px 4px 0 0; color: #2a2a2a; }
.diamonds a { display: flex; align-items: center; justify-content: center; width: 24px; height: 24px; border-radius: 3px; background: #ffc107; transform: rotate(45deg); }
.diamonds svg { transform: rotate(-45deg); }
.side p { width: 165px; margin-top: 18px; padding-right: 8px; font-size: 9px; line-height: 15px; color: #a5a5a5; }
.copyright { position: relative; padding-top: 3px; line-height: 16px; font-size: 9px; }

.to-top { position: fixed; top: 948px; right: 16px; display: flex; align-items: center; justify-content: center; width: 46px; height: 46px; border-radius: 50%; background: #cbcbcb; }
.to-top svg { width: 18px; height: 10px; }
</style>
